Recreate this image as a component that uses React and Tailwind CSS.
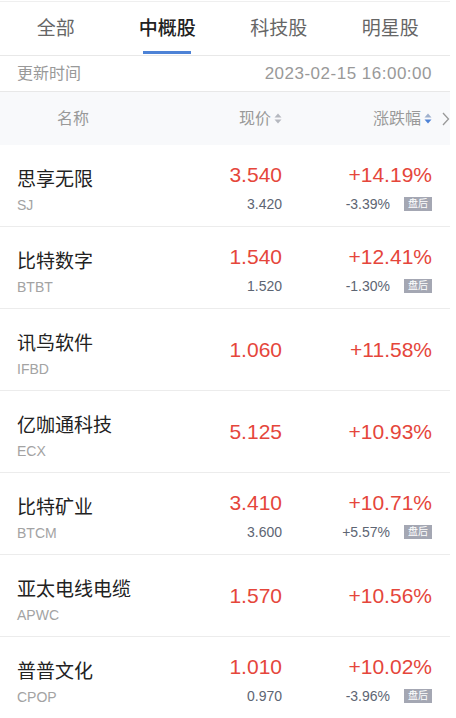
const stocks = [
  { name: "思享无限", code: "SJ", price: "3.540", change: "+14.19%", afterPrice: "3.420", afterChange: "-3.39%" },
  { name: "比特数字", code: "BTBT", price: "1.540", change: "+12.41%", afterPrice: "1.520", afterChange: "-1.30%" },
  { name: "讯鸟软件", code: "IFBD", price: "1.060", change: "+11.58%" },
  { name: "亿咖通科技", code: "ECX", price: "5.125", change: "+10.93%" },
  { name: "比特矿业", code: "BTCM", price: "3.410", change: "+10.71%", afterPrice: "3.600", afterChange: "+5.57%" },
  { name: "亚太电线电缆", code: "APWC", price: "1.570", change: "+10.56%" },
  { name: "普普文化", code: "CPOP", price: "1.010", change: "+10.02%", afterPrice: "0.970", afterChange: "-3.96%" },
];

const tabs = ["全部", "中概股", "科技股", "明星股"];

function SortIcon({ active }) {
  return (
    <svg width="8" height="11" viewBox="0 0 8 11" className="ml-[3px]">
      <path d="M4 0.5 L7.5 4.5 L0.5 4.5 Z" fill={active ? "#9fb0cc" : "#b5b8bf"} />
      <path d="M4 10.5 L7.5 6.5 L0.5 6.5 Z" fill={active ? "#4d82d6" : "#b5b8bf"} />
    </svg>
  );
}

function StockRow({ s }) {
  const hasAfter = !!s.afterPrice;
  return (
    <div className="flex h-[82px] border-b border-[#ececec]">
      <div className="w-[200px] pl-[17px] pt-[23px]">
        <div className="text-[19px] leading-[24px] text-[#222]">{s.name}</div>
        <div className="mt-[4px] text-[14px] leading-[18px] text-[#a3a3a3]">{s.code}</div>
      </div>
      <div className={`w-[82px] flex flex-col items-end ${hasAfter ? "pt-[17px]" : "justify-center"}`}>
        <div className="text-[21px] leading-[26px] text-[#e5463b]">{s.price}</div>
        {hasAfter && (
          <div className="mt-[7px] text-[14px] leading-[18px] text-[#5d6573]">{s.afterPrice}</div>
        )}
      </div>
      <div className={`flex-1 pr-[18px] flex flex-col items-end ${hasAfter ? "pt-[17px]" : "justify-center"}`}>
        <div className="text-[21px] leading-[26px] text-[#e5463b]">{s.change}</div>
        {hasAfter && (
          <div className="mt-[7px] flex items-center">
            <span className="text-[14px] leading-[18px] text-[#5d6573]">{s.afterChange}</span>
            <span className="ml-[14px] w-[28px] h-[14px] bg-[#a4a7b3] text-white text-[10px] leading-[14px] flex items-center justify-center">
              盘后
            </span>
          </div>
        )}
      </div>
    </div>
  );
}

export default function App() {
  return (
    <div
      className="w-[456px] h-[718px] overflow-hidden bg-white"
      style={{ fontFamily: '"Liberation Sans", "Noto Sans CJK SC", sans-serif' }}
    >
      <div className="w-[450px]">
        <div className="h-[2px] border-b border-[#efefef]" />
        {/* tabs */}
        <div className="flex h-[54px] pr-[4px] border-b border-[#e8e8e8]">
          {tabs.map((t, i) => (
            <div key={t} className="flex-1 flex flex-col items-center justify-center relative">
              <span
                className={`text-[19px] leading-[24px] ${i === 1 ? "text-[#222] font-medium" : "text-[#666]"}`}
              >
                {t}
              </span>
              {i === 1 && <div className="absolute bottom-[1px] w-[48px] h-[3px] bg-[#4d82d6]" />}
            </div>
          ))}
        </div>
        {/* update time */}
        <div className="flex items-center justify-between h-[36px] px-[17px] pr-[18px] border-b border-[#e8e8e8] text-[16px] text-[#999]">
          <span>更新时间</span>
          <span className="text-[17px] tracking-[0.5px]">2023-02-15 16:00:00</span>
        </div>
        {/* table header */}
        <div className="flex items-center h-[53px] bg-[#f8f9fb] text-[16px] text-[#999]">
          <div className="w-[200px] pl-[57px]">名称</div>
          <div className="w-[82px] flex items-center justify-end">
            现价
            <SortIcon />
          </div>
          <div className="flex-1 flex items-center justify-end pr-[18px]">
            涨跌幅
            <SortIcon active />
          </div>
        </div>
      </div>
      <div className="w-[450px] relative">
        <svg width="8" height="14" viewBox="0 0 8 14" className="absolute right-[0px] top-[-33px]">
          <path d="M1 1 L6.5 7 L1 13" fill="none" stroke="#999" strokeWidth="1.3" />
        </svg>
        {stocks.map((s) => (
          <StockRow key={s.code} s={s} />
        ))}
      </div>
    </div>
  );
}
